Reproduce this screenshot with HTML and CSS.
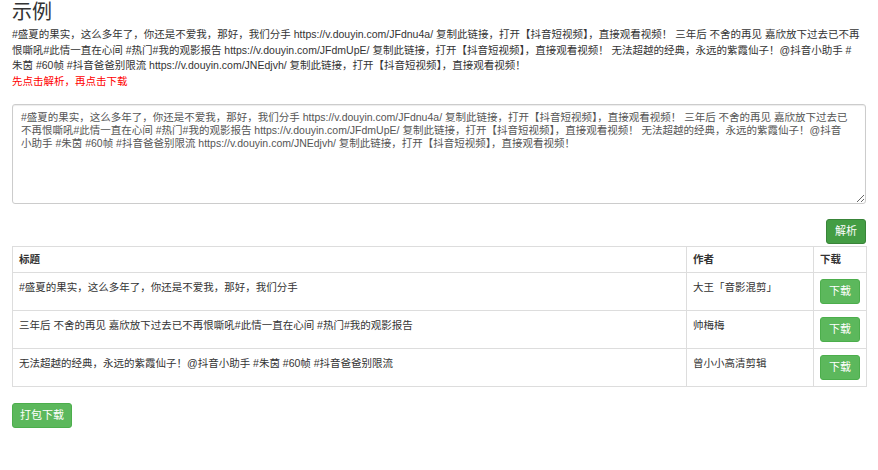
FILE: index.html
```html
<!DOCTYPE html>
<html lang="zh-CN">
<head>
<meta charset="utf-8">
<title>示例</title>
<link rel="stylesheet" href="styles.css">
</head>
<body>
<div class="page">
  <h3 class="title">示例</h3>
  <p class="intro">#盛夏的果实，这么多年了，你还是不爱我，那好，我们分手 https://v.douyin.com/JFdnu4a/ 复制此链接，打开【抖音短视频】，直接观看视频！ 三年后 不舍的再见 嘉欣放下过去已不再恨嘶吼#此情一直在心间 #热门#我的观影报告 https://v.douyin.com/JFdmUpE/ 复制此链接，打开【抖音短视频】，直接观看视频！ 无法超越的经典，永远的紫霞仙子！@抖音小助手 #朱茵 #60帧 #抖音爸爸别限流 https://v.douyin.com/JNEdjvh/ 复制此链接，打开【抖音短视频】，直接观看视频！</p>
  <p class="hint">先点击解析，再点击下载</p>
  <textarea class="input">#盛夏的果实，这么多年了，你还是不爱我，那好，我们分手 https://v.douyin.com/JFdnu4a/ 复制此链接，打开【抖音短视频】，直接观看视频！ 三年后 不舍的再见 嘉欣放下过去已不再恨嘶吼#此情一直在心间 #热门#我的观影报告 https://v.douyin.com/JFdmUpE/ 复制此链接，打开【抖音短视频】，直接观看视频！ 无法超越的经典，永远的紫霞仙子！@抖音小助手 #朱茵 #60帧 #抖音爸爸别限流 https://v.douyin.com/JNEdjvh/ 复制此链接，打开【抖音短视频】，直接观看视频！</textarea>
  <div class="actions">
    <button class="btn btn-active">解析</button>
  </div>
  <table class="list">
    <thead>
      <tr><th class="col-title">标题</th><th class="col-author">作者</th><th class="col-dl">下载</th></tr>
    </thead>
    <tbody>
      <tr><td>#盛夏的果实，这么多年了，你还是不爱我，那好，我们分手</td><td>大王「音影混剪」</td><td><button class="btn">下载</button></td></tr>
      <tr><td>三年后 不舍的再见 嘉欣放下过去已不再恨嘶吼#此情一直在心间 #热门#我的观影报告</td><td>帅梅梅</td><td><button class="btn">下载</button></td></tr>
      <tr><td>无法超越的经典，永远的紫霞仙子！@抖音小助手 #朱茵 #60帧 #抖音爸爸别限流</td><td>曾小小高清剪辑</td><td><button class="btn">下载</button></td></tr>
    </tbody>
  </table>
  <button class="btn btn-pack">打包下载</button>
</div>
</body>
</html>
```

FILE: styles.css
```css
html, body {
  margin: 0;
  padding: 0;
  background: #fff;
}
body {
  font-family: "Liberation Sans", "Noto Sans CJK SC", sans-serif;
  font-size: 10.5px;
  line-height: 15.5px;
  color: #333;
}
.page {
  padding: 0 12px;
  width: 854px;
}
.title {
  margin: 0;
  font-size: 20px;
  line-height: 24px;
  font-weight: normal;
  color: #333;
}
.intro {
  margin: 3px 5px 0 0;
}
.hint {
  margin: 0;
  color: #f00;
}
.input {
  display: block;
  box-sizing: border-box;
  width: 854px;
  height: 100px;
  margin-top: 15px;
  padding: 6px 17px 6px 8px;
  border: 1px solid #ccc;
  border-radius: 3px;
  box-shadow: inset 0 1px 1px rgba(0,0,0,.075);
  font-family: "Liberation Sans", "Noto Sans CJK SC", sans-serif;
  font-size: 10.5px;
  line-height: 13px;
  color: #555;
  resize: vertical;
}
.actions {
  display: flex;
  justify-content: flex-end;
  margin-top: 15px;
  margin-bottom: 2px;
}
.btn {
  box-sizing: border-box;
  height: 25px;
  padding: 4px 8px;
  border: 1px solid #4cae4c;
  border-radius: 3px;
  background: #5cb85c;
  color: #fff;
  font-family: "Liberation Sans", "Noto Sans CJK SC", sans-serif;
  font-size: 11px;
  line-height: 15px;
  cursor: pointer;
}
.btn-active {
  background: #449d44;
  border-color: #398439;
}
.btn-pack {
  margin-top: 16px;
  padding: 4px 7px;
}
.list {
  width: 854px;
  border-collapse: collapse;
  table-layout: fixed;
}
.list th, .list td {
  border: 1px solid #ddd;
  text-align: left;
  vertical-align: top;
}
.list th {
  padding: 5px 6px;
  line-height: 15px;
  font-weight: bold;
  color: #333;
}
.list td {
  padding: 6px 6px;
  line-height: 16px;
}
.col-title { width: 661px; }
.col-author { width: 114px; }
.col-dl { width: 40px; }
```
